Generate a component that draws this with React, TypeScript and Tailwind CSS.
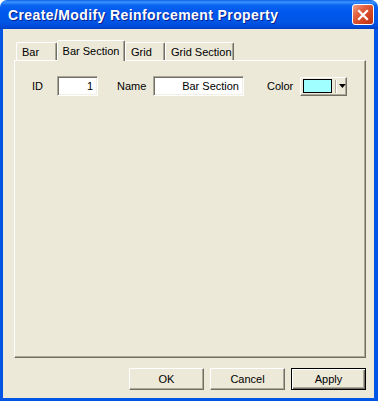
import React from 'react';

const font = { fontFamily: '"Liberation Sans", Arial, sans-serif' };

const tabs = [
  { label: 'Bar', width: 'w-[41px]' },
  { label: 'Bar Section', width: 'w-[68px]', active: true },
  { label: 'Grid', width: 'w-[40px]' },
  { label: 'Grid Section', width: 'w-[69px]' },
];

// classic sunken edit box
const Field: React.FC<{ value: string; className: string }> = ({ value, className }) => (
  <div
    className={`h-[20px] bg-white border border-t-[#ACA899] border-l-[#ACA899] border-r-white border-b-white shadow-[inset_1px_1px_0_#716F64,inset_-1px_-1px_0_#F1EFE2] flex items-center justify-end pr-[4px] text-[11px] text-black ${className}`}
  >
    {value}
  </div>
);

const Button: React.FC<{ label: string; isDefault?: boolean }> = ({ label, isDefault }) => (
  <button
    className={`w-[75px] h-[22px] bg-[#ECE9D8] text-[11px] text-black flex items-center justify-center border ${
      isDefault
        ? 'border-black shadow-[inset_1px_1px_0_#fff,inset_-1px_-1px_0_#716F64,inset_-2px_-2px_0_#ACA899]'
        : 'border-t-white border-l-white border-r-[#716F64] border-b-[#716F64] shadow-[inset_-1px_-1px_0_#ACA899]'
    }`}
  >
    {label}
  </button>
);

export default function App() {
  return (
    <div className="w-[378px] h-[401px] bg-white flex flex-col select-none" style={font}>
      {/* Title bar */}
      <div className="h-[29px] shrink-0 rounded-t-[7px] flex items-center justify-between bg-[linear-gradient(180deg,#0A5FE8_0%,#3D95FF_7%,#0A64F0_18%,#0058EE_40%,#0055E5_75%,#004AD8_92%,#003EC0_100%)]">
        <span className="pl-[8px] pt-[1px] text-[14px] tracking-[0.4px] font-bold text-white [text-shadow:1px_1px_0_#0A1E8C]">
          Create/Modify Reinforcement Property
        </span>
        <div className="mr-[4px] w-[22px] h-[21px] rounded-[3px] border border-white bg-[linear-gradient(135deg,#F0A08A_0%,#E2603F_35%,#D0421F_70%,#B8351A_100%)] flex items-center justify-center">
          <svg width="12" height="12" viewBox="0 0 12 12">
            <path d="M2 2 L10 10 M10 2 L2 10" stroke="white" strokeWidth="2.2" strokeLinecap="square" />
          </svg>
        </div>
      </div>

      {/* Body */}
      <div className="flex-1 flex flex-col bg-[#ECE9D8] border-l-[3px] border-r-[4px] border-b-[3px] border-[#0055E5]">
        {/* Tabs */}
        <div className="mt-[11px] ml-[13px] h-[20px] flex items-end">
          {tabs.map((t) =>
            t.active ? (
              <div
                key={t.label}
                className={`${t.width} h-[21px] -mb-[1px] relative z-10 bg-[#ECE9D8] border-t border-l border-white border-r border-r-[#716F64] rounded-t-[2px] shadow-[inset_-1px_0_0_#ACA899] flex items-start justify-center pt-[2px] text-[11px] text-black`}
              >
                {t.label}
              </div>
            ) : (
              <div
                key={t.label}
                className={`${t.width} h-[18px] bg-[#ECE9D8] border-t border-l border-white border-r border-r-[#716F64] rounded-t-[2px] shadow-[inset_-1px_0_0_#ACA899] flex items-center pl-[5px] pt-[1px] text-[11px] text-black`}
              >
                {t.label}
              </div>
            )
          )}
        </div>

        {/* Panel */}
        <div className="ml-[11px] mr-[8px] h-[298px] border border-t-white border-l-white border-r-[#716F64] border-b-[#716F64] shadow-[inset_-1px_-1px_0_#ACA899] pt-[15px] pl-[17px]">
          <div className="flex items-center h-[20px] text-[11px] text-black">
            <span className="w-[25px]">ID</span>
            <Field value="1" className="w-[41px]" />
            <span className="w-[19px]" />
            <span className="w-[36px]">Name</span>
            <Field value="Bar Section" className="w-[91px]" />
            <span className="w-[23px]" />
            <span className="w-[33px]">Color</span>
            <div className="w-[47px] h-[19px] border border-t-white border-l-white border-r-[#716F64] border-b-[#716F64] shadow-[inset_-1px_-1px_0_#ACA899] flex items-center pl-[2px]">
              <div className="w-[30px] h-[14px] border border-black bg-[#A0FFFF]" />
              <div className="ml-[3px] w-[2px] h-[13px] border-l border-[#ACA899] border-r border-r-white" />
              <svg width="7" height="4" viewBox="0 0 7 4" className="ml-[2px]">
                <path d="M0 0 H7 L3.5 4 Z" fill="black" />
              </svg>
            </div>
          </div>
        </div>

        {/* Buttons */}
        <div className="mt-[10px] mr-[8px] flex justify-end gap-[6px]">
          <Button label="OK" />
          <Button label="Cancel" />
          <Button label="Apply" isDefault />
        </div>
      </div>
    </div>
  );
}
